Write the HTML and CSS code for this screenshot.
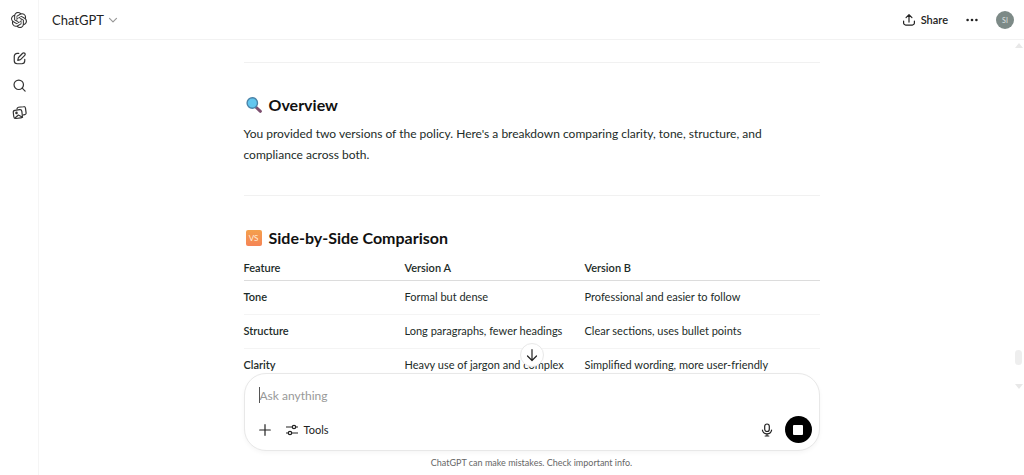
FILE: index.html
```html
<!DOCTYPE html>
<html lang="en">
<head>
    <meta charset="UTF-8">
    <meta name="viewport" content="width=device-width, initial-scale=1.0">
    <title>ChatGPT</title>
    <link rel="stylesheet" href="styles.css">
</head>
<body>
    <nav class="sidebar">
        <a href="#" class="logo" aria-label="Home">
            <svg width="16" height="16" viewBox="0 0 24 24" fill="currentColor"><path d="M22.2819 9.8211a5.9847 5.9847 0 0 0-.5157-4.9108 6.0462 6.0462 0 0 0-6.5098-2.9A6.0651 6.0651 0 0 0 4.9807 4.1818a5.9847 5.9847 0 0 0-3.9977 2.9 6.0462 6.0462 0 0 0 .7427 7.0966 5.98 5.98 0 0 0 .511 4.9107 6.051 6.051 0 0 0 6.5146 2.9001A5.9847 5.9847 0 0 0 13.2599 24a6.0557 6.0557 0 0 0 5.7718-4.2058 5.9894 5.9894 0 0 0 3.9977-2.9001 6.0557 6.0557 0 0 0-.7475-7.0729zm-9.022 12.6081a4.4755 4.4755 0 0 1-2.8764-1.0408l.1419-.0804 4.7783-2.7582a.7948.7948 0 0 0 .3927-.6813v-6.7369l2.02 1.1686a.071.071 0 0 1 .038.052v5.5826a4.504 4.504 0 0 1-4.4945 4.4944zm-9.6607-4.1254a4.4708 4.4708 0 0 1-.5346-3.0137l.142.0852 4.783 2.7582a.7712.7712 0 0 0 .7806 0l5.8428-3.3685v2.3324a.0804.0804 0 0 1-.0332.0615L9.74 19.9502a4.4992 4.4992 0 0 1-6.1408-1.6464zM2.3408 7.8956a4.485 4.485 0 0 1 2.3655-1.9728V11.6a.7664.7664 0 0 0 .3879.6765l5.8144 3.3543-2.0201 1.1685a.0757.0757 0 0 1-.071 0l-4.8303-2.7865A4.504 4.504 0 0 1 2.3408 7.872zm16.5963 3.8558L13.1038 8.364 15.1192 7.2a.0757.0757 0 0 1 .071 0l4.8303 2.7913a4.4944 4.4944 0 0 1-.6765 8.1042v-5.6772a.79.79 0 0 0-.407-.667zm2.0107-3.0231l-.142-.0852-4.7735-2.7818a.7759.7759 0 0 0-.7854 0L9.409 9.2297V6.8974a.0662.0662 0 0 1 .0284-.0615l4.8303-2.7866a4.4992 4.4992 0 0 1 6.6802 4.66zM8.3065 12.863l-2.02-1.1638a.0804.0804 0 0 1-.038-.0567V6.0742a4.4992 4.4992 0 0 1 7.3757-3.4537l-.142.0805L8.704 5.459a.7948.7948 0 0 0-.3927.6813zm1.0976-2.3654l2.602-1.4998 2.6069 1.4998v2.9994l-2.5974 1.4997-2.6067-1.4997Z"/></svg>
        </a>
        <a href="#" aria-label="New chat">
            <svg class="line" width="15" height="15" viewBox="0 0 20 20"><path d="M9 3.2H7A4 4 0 0 0 3 7.2V13a4 4 0 0 0 4 4h6a4 4 0 0 0 4-4v-2"/><path d="M14.2 3a1.9 1.9 0 0 1 2.8 2.8l-5.300 5.300a3 3 0 0 1-1.500.8l-2.500.5.500-2.500a3 3 0 0 1 .8-1.600z"/></svg>
        </a>
        <a href="#" aria-label="Search chats">
            <svg class="line" width="15" height="15" viewBox="0 0 20 20"><circle cx="9" cy="9" r="6.300"/><path d="M13.600 13.600 17.500 17.500"/></svg>
        </a>
        <a href="#" aria-label="Library">
            <svg class="line" width="15" height="15" viewBox="0 0 20 20"><path d="M6.500 5.300 7 4.200a2 2 0 0 1 1.600-1.200l7-.9a2 2 0 0 1 2.300 1.800l.9 6.600a2 2 0 0 1-1.700 2.300l-1.700.3"/><rect x="2" y="6.600" width="11.500" height="11" rx="2.600" transform="rotate(-7 8 12)"/><circle cx="6" cy="10.500" r=".9"/><path d="m4 17.400 4.500-4 5.600 3"/></svg>
        </a>
    </nav>

    <main class="main">
        <header class="topbar">
            <button class="model">ChatGPT
                <svg class="line" width="10" height="10" viewBox="0 0 10 10"><path d="m1.500 3.300 3.500 3.500 3.500-3.500"/></svg>
            </button>
            <div class="actions">
                <button class="share">
                    <svg class="line" width="14" height="14" viewBox="0 0 20 20"><path d="M10 13V2.500M5.800 6.500 10 2.300l4.200 4.200M2.300 11.500v2.700a3 3 0 0 0 3 3h9.400a3 3 0 0 0 3-3v-2.700"/></svg>
                    Share
                </button>
                <button class="more" aria-label="More">
                    <svg width="12" height="4" viewBox="0 0 12 4" fill="currentColor"><circle cx="1.600" cy="2" r="1.300"/><circle cx="6" cy="2" r="1.300"/><circle cx="10.400" cy="2" r="1.300"/></svg>
                </button>
                <button class="avatar">SI</button>
            </div>
        </header>

        <div class="thread">
            <article class="answer">
                <hr>
                <h3>
                    <svg width="18" height="18" viewBox="0 0 18 18"><path d="m10.800 11 4.600 4.300" stroke="#7d5070" stroke-width="3" stroke-linecap="round"/><circle cx="7.300" cy="7" r="5.200" fill="#62c6ee" stroke="#4a83a8" stroke-width="1.400"/></svg>
                    Overview
                </h3>
                <p>You provided two versions of the policy. Here's a breakdown comparing clarity, tone, structure, and compliance across both.</p>
                <hr>
                <h3><span class="vs">VS</span>Side-by-Side Comparison</h3>
                <table>
                    <thead>
                        <tr>
                            <th class="col-feature">Feature</th>
                            <th class="col-a">Version A</th>
                            <th>Version B</th>
                        </tr>
                    </thead>
                    <tbody>
                        <tr>
                            <th>Tone</th>
                            <td>Formal but dense</td>
                            <td>Professional and easier to follow</td>
                        </tr>
                        <tr>
                            <th>Structure</th>
                            <td>Long paragraphs, fewer headings</td>
                            <td>Clear sections, uses bullet points</td>
                        </tr>
                        <tr>
                            <th>Clarity</th>
                            <td>Heavy use of jargon and complex</td>
                            <td>Simplified wording, more user-friendly</td>
                        </tr>
                    </tbody>
                </table>
            </article>
        </div>

        <div class="bottom">
            <button class="to-bottom" aria-label="Scroll to bottom">
                <svg class="line" width="14" height="14" viewBox="0 0 14 14"><path d="M7 1.500v11M2.500 8 7 12.500 11.500 8"/></svg>
            </button>
            <form class="composer">
                <input type="text" placeholder="Ask anything" aria-label="Message">
                <div class="tools">
                    <button type="button" aria-label="Add">
                        <svg class="line" width="12" height="12" viewBox="0 0 12 12"><path d="M6 .7v10.600M.7 6h10.600"/></svg>
                    </button>
                    <button type="button" class="tools-btn">
                        <svg class="line" width="12" height="12" viewBox="0 0 12 12"><path d="M.5 3h5.800M9.800 3h1.700M.5 9h1.700M5.700 9h5.800"/><circle cx="8" cy="3" r="1.700"/><circle cx="4" cy="9" r="1.700"/></svg>
                        Tools
                    </button>
                    <div class="voice">
                        <button type="button" aria-label="Dictate">
                            <svg class="line" width="12" height="14" viewBox="0 0 12 14"><rect x="3.700" y="1" width="4.600" height="7.500" rx="2.300"/><path d="M1.400 7.200a4.700 4.700 0 0 0 9.200 0M6 10.800v2.200M4.200 13h3.600"/></svg>
                        </button>
                        <button type="button" class="stop" aria-label="Stop"><span></span></button>
                    </div>
                </div>
            </form>
            <p class="note">ChatGPT can make mistakes. Check important info.</p>
        </div>

        <div class="scrollbar">
            <span class="up"></span>
            <span class="thumb"></span>
            <span class="down"></span>
        </div>
    </main>
</body>
</html>
```
FILE: styles.css
```css
* {
    box-sizing: border-box;
}

body {
    margin: 0;
    display: flex;
    height: 100vh;
    overflow: hidden;
    font-family: Lato, "Open Sans", sans-serif;
    font-size: 12px;
    color: #1c2b28;
    background: #fff;
}

button {
    display: flex;
    align-items: center;
    padding: 0;
    border: 0;
    background: none;
    font: inherit;
    color: #222;
}

svg {
    display: block;
    flex: none;
}

.line {
    fill: none;
    stroke: currentColor;
    stroke-width: 1.2;
    stroke-linecap: round;
    stroke-linejoin: round;
}

/* sidebar */
.sidebar {
    display: flex;
    flex-direction: column;
    align-items: center;
    gap: 12px;
    width: 39px;
    padding-top: 12px;
    border-right: 1px solid #f5f5f5;
}

.sidebar a {
    color: #333;
}

.sidebar .logo {
    margin-bottom: 11px;
}

.sidebar .line {
    stroke-width: 1.6;
}

/* main column */
.main {
    position: relative;
    flex: 1;
    display: flex;
    flex-direction: column;
    min-width: 0;
}

.topbar {
    display: flex;
    align-items: center;
    justify-content: space-between;
    height: 40px;
    padding: 0 10px 0 13px;
    border-bottom: 1px solid #f2f2f2;
}

.model {
    gap: 4px;
    font-size: 13px;
}

.model svg {
    color: #999;
}

.actions {
    display: flex;
    align-items: center;
    gap: 18px;
}

.share {
    gap: 5px;
    font-size: 11px;
    font-weight: 600;
}

.share .line {
    stroke-width: 1.7;
}

.avatar {
    justify-content: center;
    width: 18px;
    height: 18px;
    border-radius: 50%;
    background: #7d8a87;
    color: #dfe4e2;
    font-size: 7px;
}

/* conversation */
.thread {
    flex: 1;
    min-height: 0;
    overflow: hidden;
}

.answer {
    max-width: 576px;
    margin: 0 auto;
    padding-top: 22px;
}

hr {
    height: 1px;
    margin: 0;
    border: 0;
    background: #f1f1f1;
}

h3 {
    display: flex;
    align-items: center;
    gap: 6px;
    margin: 30px 0 0;
    padding-left: 1px;
    line-height: 24px;
    font-size: 16px;
    font-weight: 700;
    color: #111;
}

.answer p {
    margin: 6px 0 30px;
    line-height: 21px;
}

.vs {
    width: 16px;
    height: 16px;
    margin: 0 1px;
    border-radius: 2px;
    background: linear-gradient(#f4a04c, #f58456);
    color: #fff1dd;
    font-size: 8px;
    font-weight: 400;
    line-height: 16px;
    text-align: center;
}

table {
    width: 100%;
    border-collapse: collapse;
    table-layout: fixed;
    font-size: 11px;
    line-height: 16px;
}

th,
td {
    padding: 8px 0 9px;
    border-bottom: 1px solid #f4f4f4;
    text-align: left;
    vertical-align: top;
}

th {
    font-weight: 600;
}

thead th {
    padding: 10px 0 4px;
    border-bottom-color: #dcdcdc;
}

.col-feature {
    width: 161px;
}

.col-a {
    width: 180px;
}

/* composer */
.bottom {
    position: relative;
    width: 576px;
    max-width: 100%;
    margin: 0 auto;
}

.to-bottom {
    position: absolute;
    top: -30px;
    left: 50%;
    justify-content: center;
    width: 24px;
    height: 24px;
    margin-left: -12px;
    border: 1px solid #e8e8e8;
    border-radius: 50%;
    background: #fff;
}

.composer {
    padding: 13px 7px 7px 14px;
    border: 1px solid #e8e8e8;
    border-radius: 22px;
    background: #fff;
    box-shadow: 0 2px 4px rgba(0, 0, 0, 0.04);
}

.composer input {
    display: block;
    width: 100%;
    height: 16px;
    padding: 0;
    border: 0;
    border-left: 1px solid #555;
    border-radius: 0;
    outline: 0;
    font: inherit;
    font-size: 12px;
}

.composer input::placeholder {
    color: #999;
}

.tools {
    display: flex;
    align-items: center;
    gap: 15px;
    margin-top: 13px;
}

.tools-btn {
    gap: 6px;
    font-size: 11px;
}

.voice {
    display: flex;
    align-items: center;
    gap: 12px;
    margin-left: auto;
}

.stop {
    justify-content: center;
    width: 27px;
    height: 27px;
    border-radius: 50%;
    background: #000;
}

.stop span {
    width: 10px;
    height: 10px;
    border-radius: 1px;
    background: #fff;
}

.note {
    margin: 4px 0;
    color: #666;
    font-size: 9px;
    line-height: 16px;
    text-align: center;
}

/* scrollbar drawn over the right edge */
.scrollbar {
    position: absolute;
    top: 43px;
    right: 2px;
    bottom: 86px;
    display: flex;
    flex-direction: column;
    align-items: center;
    width: 7px;
}

.up,
.down {
    border: 4px solid transparent;
}

.up {
    border-top: 0;
    border-bottom: 5px solid #e8e8e8;
}

.down {
    border-bottom: 0;
    border-top: 5px solid #e8e8e8;
}

.thumb {
    width: 7px;
    height: 15px;
    margin: auto 0 19px;
    border-radius: 4px;
    background: #eee;
}
```
